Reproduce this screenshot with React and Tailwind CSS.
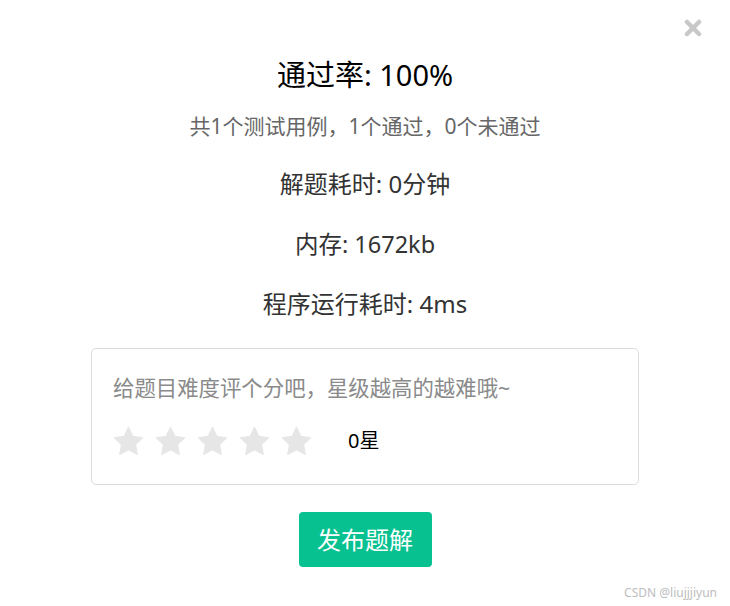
import React from "react";

const font = { fontFamily: '"Noto Sans", "Noto Sans CJK SC", sans-serif' };

function Star() {
  return (
    <svg width="31" height="30" viewBox="0 0 24 23" className="shrink-0">
      <path
        d="M12 0.8l3.4 7 7.6 1.1-5.5 5.4 1.3 7.6L12 18.3l-6.8 3.6 1.3-7.6L1 8.9l7.6-1.1z"
        fill="#e6e6e6"
        stroke="#e6e6e6"
        strokeWidth="0.8"
        strokeLinejoin="round"
      />
    </svg>
  );
}

export default function App() {
  const stars = [0, 1, 2, 3, 4];

  return (
    <div
      className="relative w-[730px] h-[606px] bg-white flex flex-col items-center overflow-hidden"
      style={font}
    >
      <button className="absolute top-[19px] right-[28px] w-[18px] h-[18px]">
        <svg width="18" height="18" viewBox="0 0 18 18">
          <path
            d="M3 3L15 15M15 3L3 15"
            stroke="#c8c8c8"
            strokeWidth="4.5"
            strokeLinecap="round"
          />
        </svg>
      </button>

      <h1 className="mt-[53px] text-[29px] leading-[44px] text-black">
        通过率: 100%
      </h1>
      <p className="mt-[13px] text-[21px] leading-[32px] text-[#666]">
        共1个测试用例，1个通过，0个未通过
      </p>
      <p className="mt-[24px] text-[24px] leading-[36px] text-[#333]">
        解题耗时: 0分钟
      </p>
      <p className="mt-[24px] text-[23.5px] leading-[36px] text-[#333]">
        内存: 1672kb
      </p>
      <p className="mt-[24px] text-[24px] leading-[36px] text-[#333]">
        程序运行耗时: 4ms
      </p>

      <div className="mt-[26px] w-[548px] h-[137px] border border-[#dcdcdc] rounded-[5px] pt-[23px] pl-[21px]">
        <p className="text-[21.4px] leading-[32px] text-[#8a8a8a]">
          给题目难度评个分吧，星级越高的越难哦~
        </p>
        <div className="mt-[22px] flex items-center">
          <div className="flex gap-[11px]">
            {stars.map((i) => (
              <Star key={i} />
            ))}
          </div>
          <span className="ml-[36px] text-[20px] leading-[30px] text-black">
            0星
          </span>
        </div>
      </div>

      <button className="mt-[27px] w-[133px] h-[55px] rounded-[4px] bg-[#08c190] text-white text-[24px] leading-[36px]">
        发布题解
      </button>

      <span className="absolute right-[13px] bottom-[5px] text-[12px] leading-[16px] text-[#bdbdbd]">
        CSDN @liujjjiyun
      </span>
    </div>
  );
}
